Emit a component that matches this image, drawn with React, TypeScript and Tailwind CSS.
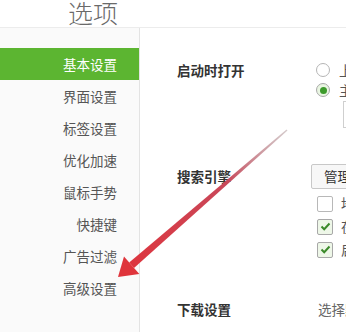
import type { ReactNode } from 'react'

const menu = ['基本设置', '界面设置', '标签设置', '优化加速', '鼠标手势', '快捷键', '广告过滤', '高级设置']

function Radio({ checked }: { checked?: boolean }) {
  return (
    <span
      className={
        'shrink-0 flex items-center justify-center w-[14px] h-[14px] rounded-full border ' +
        (checked ? 'border-[#a9a9a9] bg-[#e9f6e2]' : 'border-[#b5b5b5] bg-white')
      }
    >
      {checked && <span className="w-[7px] h-[7px] rounded-full bg-[#3d9b2c]" />}
    </span>
  )
}

function Check({ checked }: { checked?: boolean }) {
  return (
    <span
      className={
        'shrink-0 flex items-center justify-center w-[16px] h-[16px] rounded-[2px] border ' +
        (checked ? 'border-[#a8a8a8] bg-[#eef7e8]' : 'border-[#b8b8b8] bg-white')
      }
    >
      {checked && (
        <svg width="11" height="9" viewBox="0 0 11 9">
          <path d="M1.5 4.5 L4.2 7.2 L9.5 1.5" fill="none" stroke="#3b8a2a" strokeWidth="2" />
        </svg>
      )}
    </span>
  )
}

function Row({ label, children, className }: { label: string; children: ReactNode; className?: string }) {
  return (
    <div className={'flex ' + (className ?? '')}>
      <div className="w-[171px] shrink-0 pl-[37px] text-[13.5px] font-bold text-[#333]">{label}</div>
      <div className="flex-1 min-w-0">{children}</div>
    </div>
  )
}

export default function App() {
  return (
    <div
      className="relative w-[346px] h-[335px] overflow-hidden bg-white"
      style={{ fontFamily: '"Noto Sans CJK SC", "Noto Sans", sans-serif' }}
    >
      {/* header */}
      <div className="h-[31px] border-b border-[#ececec] pl-[68px]">
        <div className="-mt-[3px] text-[25px] leading-[30px] font-light text-[#6a6a6a]">选项</div>
      </div>

      <div className="flex h-[304px]">
        {/* sidebar */}
        <div className="w-[140px] shrink-0 border-r border-[#e3e3e3] bg-[#fafafa] pt-[20px]">
          {menu.map((m, i) => (
            <div
              key={m}
              className={
                'h-[32px] flex items-center justify-end pr-[22px] text-[13.5px] ' +
                (i === 0 ? 'bg-[#5cb531] text-white' : 'text-[#555]')
              }
            >
              {m}
            </div>
          ))}
        </div>

        {/* content */}
        <div className="flex-1 min-w-0 pt-[32px] whitespace-nowrap">
          <Row label="启动时打开" className="leading-[20px]">
            <div className="flex items-center h-[20px] pl-[5px] gap-[9px] text-[13.5px] text-[#555]">
              <Radio />
              <span>上次未关闭的页面</span>
            </div>
            <div className="flex items-center h-[20px] pl-[5px] gap-[9px] text-[13.5px] text-[#555]">
              <Radio checked />
              <span>主页</span>
            </div>
            <div className="mt-[1px] ml-[32px] h-[27px] w-[200px] border border-[#cfcfcf] bg-white" />
          </Row>

          <Row label="搜索引擎" className="mt-[36px] leading-[25px]">
            <div className="h-[25px] w-[110px] rounded-[2px] border border-[#c8c8c8] bg-[#f7f7f7] pl-[12px] text-[13.5px] leading-[23px] text-[#333]">
              管理搜索引擎
            </div>
            <div className="mt-[3px]">
              {[false, true, true].map((c, i) => (
                <div key={i} className="flex items-center h-[23px] pl-[6px] gap-[8px] text-[13.5px] text-[#555]">
                  <Check checked={c} />
                  <span>{['地址栏搜索', '在新标签页打开', '启用搜索建议'][i]}</span>
                </div>
              ))}
            </div>
          </Row>

          <Row label="下载设置" className="mt-[38px] leading-[20px]">
            <div className="pl-[7px] text-[13.5px] text-[#666]">选择默认下载目录</div>
          </Row>
        </div>
      </div>

      {/* red arrow annotation */}
      <svg className="absolute inset-0 pointer-events-none" width="346" height="335" viewBox="0 0 346 335">
        <defs>
          <linearGradient id="arrowGrad" x1="287" y1="130" x2="118" y2="277" gradientUnits="userSpaceOnUse">
            <stop offset="0" stopColor="#b9a6a8" stopOpacity="0.6" />
            <stop offset="0.35" stopColor="#c8485a" />
            <stop offset="1" stopColor="#e0333b" />
          </linearGradient>
        </defs>
        <polygon points="287.5,130.6 286.5,129.4 129.2,262.5 134,268" fill="url(#arrowGrad)" />
        <polygon points="118,277 124,256.4 139.3,274" fill="#df343b" />
      </svg>
    </div>
  )
}
